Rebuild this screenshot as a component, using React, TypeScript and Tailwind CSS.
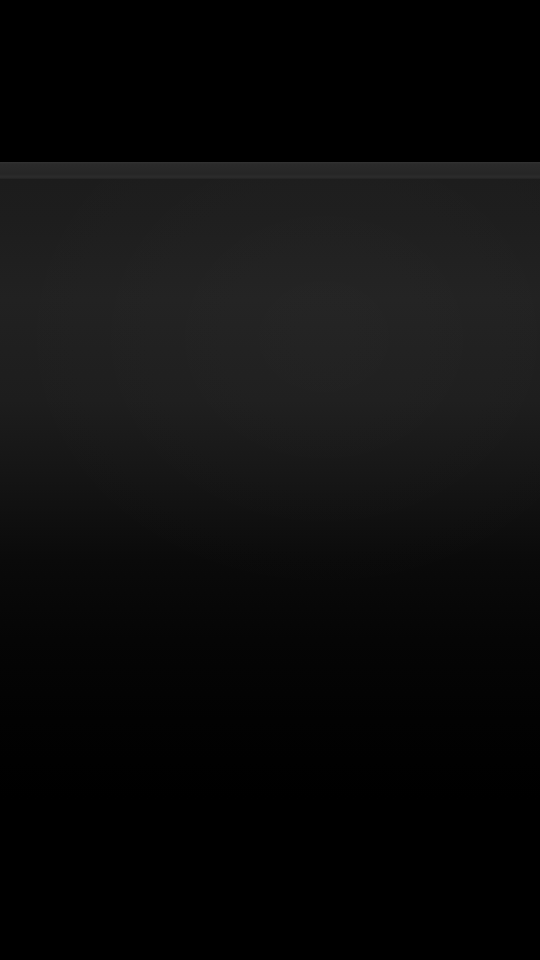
export default function App() {
  return (
    <div className="w-[540px] h-[960px] bg-black flex flex-col overflow-hidden">
      <div className="h-[162px] bg-black" />
      <div className="h-[17px] bg-[linear-gradient(to_bottom,#333333_0px,#2a2a2a_2px,#262626_12px,#2c2c2c_15px,#222222_17px)]" />
      <div className="flex-1 bg-[radial-gradient(ellipse_60%_35%_at_60%_20%,rgba(255,255,255,0.02),rgba(255,255,255,0)),linear-gradient(to_bottom,#1c1c1c_0px,#1d1d1d_40px,#212121_121px,#1d1d1d_221px,#141414_301px,#0a0a0a_381px,#050505_461px,#020202_541px,#000000_621px)]" />
    </div>
  );
}
